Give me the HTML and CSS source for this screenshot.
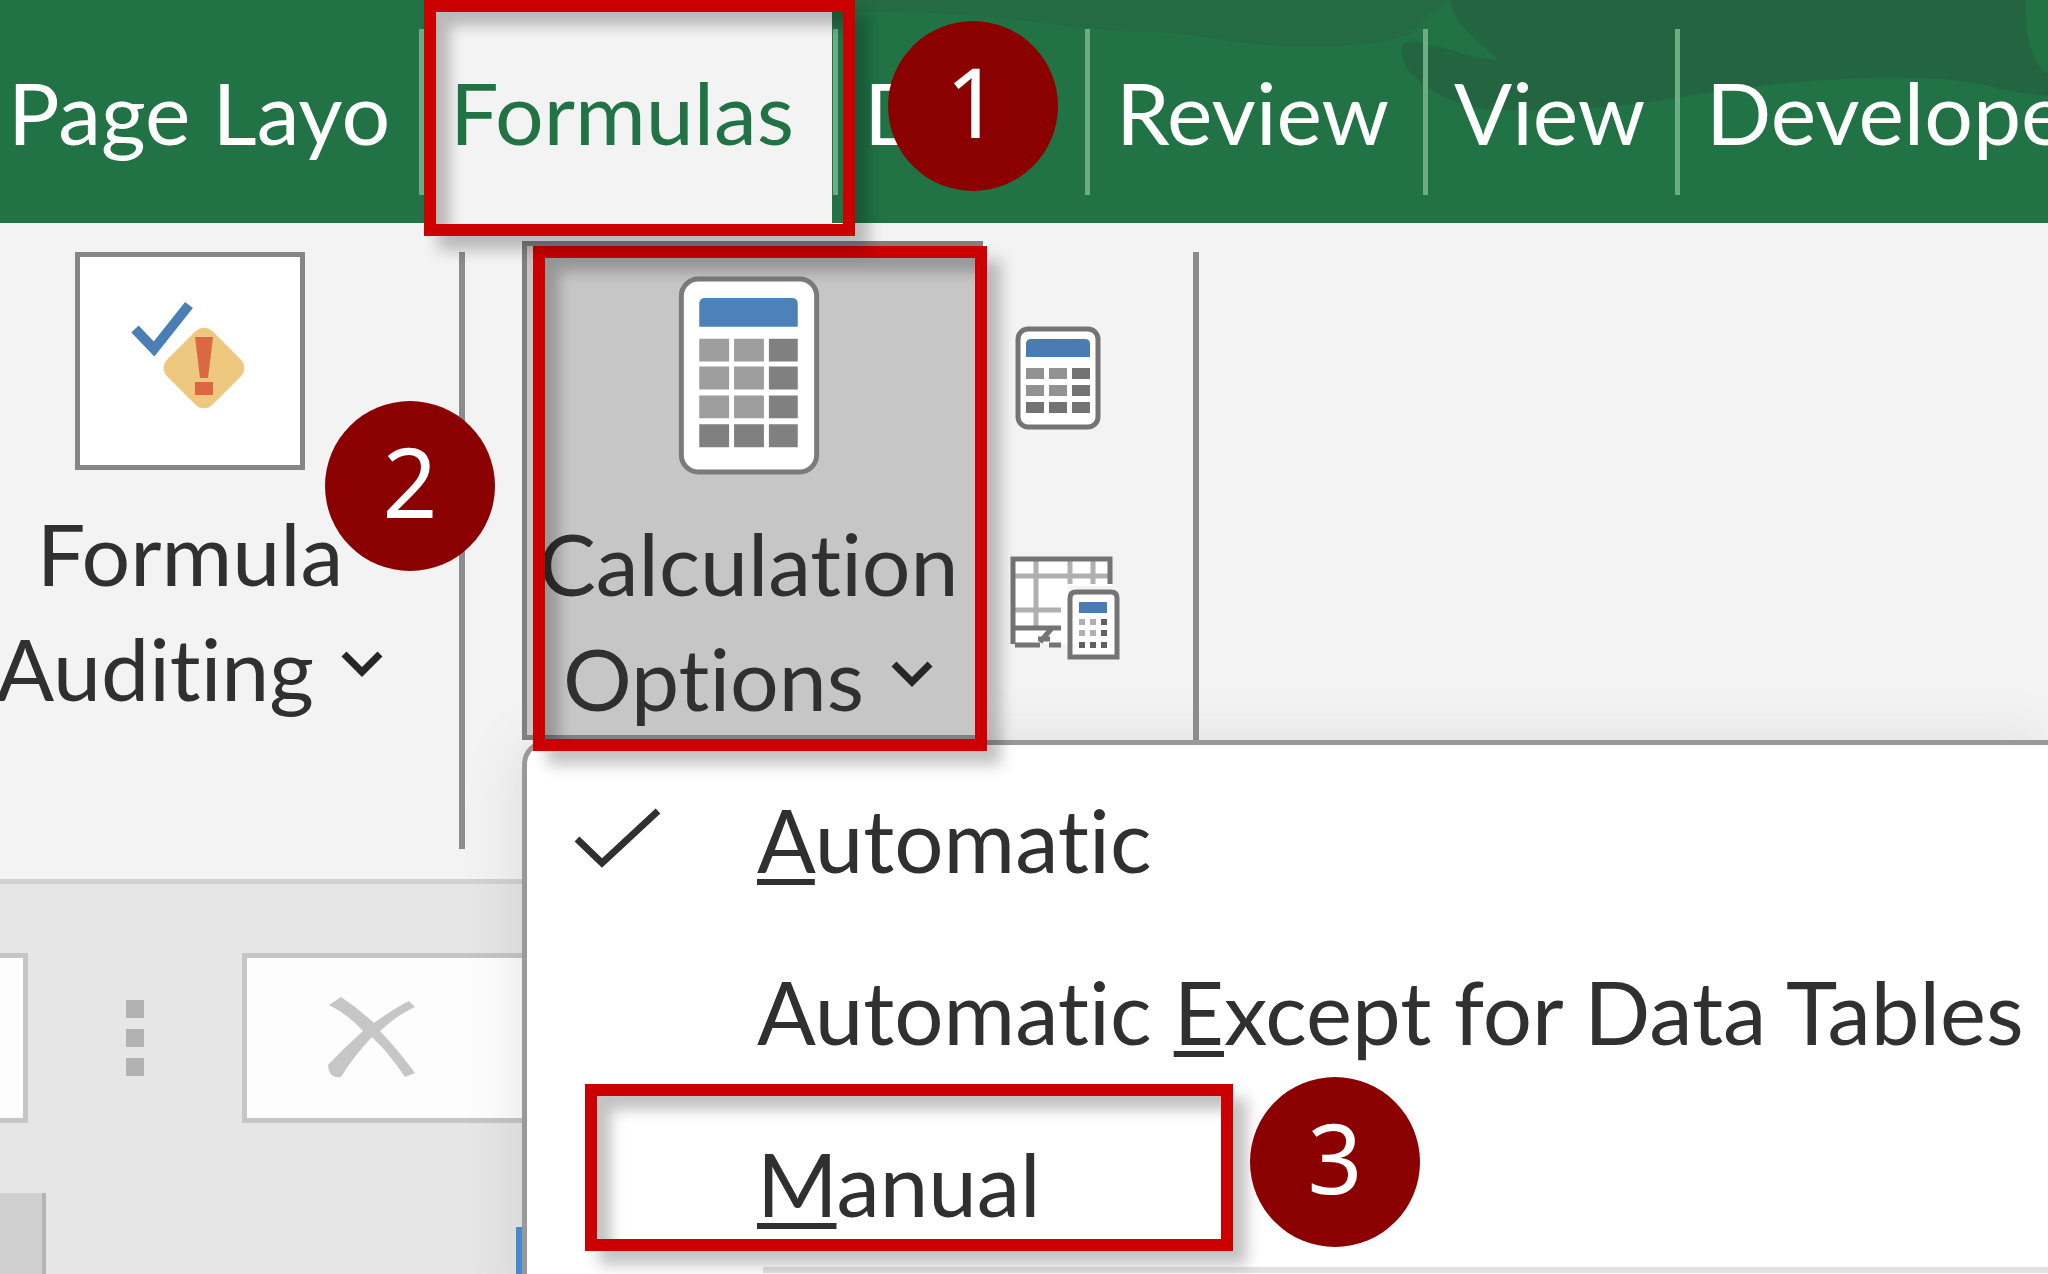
FILE: index.html
```html
<!DOCTYPE html>
<html lang="en">
<head>
<meta charset="utf-8">
<title>Calculation Options</title>
<link rel="stylesheet" href="styles.css">
</head>
<body>
<div class="app">
  <header class="titlebar">
    <svg class="pattern" viewBox="0 0 1200 223" preserveAspectRatio="xMaxYMin slice" aria-hidden="true">
      <path d="M0 0H604C560 20 590 46 470 46C380 48 350 30 290 32C200 28 150 10 0 12Z" fill="#246a43"/>
      <path d="M602 0H1178C1176 34 1184 64 1200 74V96C1150 92 1140 82 1090 79C1010 76 950 80 850 94C780 108 700 112 650 110C600 108 570 84 556 64C552 48 550 42 566 42C600 46 620 58 650 60C630 40 606 26 602 0Z" fill="#246541"/>
    </svg>
    <nav class="tabs" role="tablist" aria-label="Ribbon tabs">
      <button class="tab" role="tab">Page Layo</button>
      <button class="tab active" role="tab" aria-selected="true">Formulas<span class="frame"></span></button>
      <button class="tab" role="tab">Data<span class="badge">1</span></button>
      <button class="tab" role="tab">Review</button>
      <button class="tab" role="tab">View</button>
      <button class="tab" role="tab">Developer</button>
    </nav>
  </header>

  <section class="ribbon" aria-label="Formulas">
    <div class="group auditing">
      <button class="tool">
        <span class="tile">
          <svg width="120" height="122" viewBox="0 0 120 122" aria-hidden="true">
            <path d="M5 29L24 49L59 5" fill="none" stroke="#4a7eb4" stroke-width="10"/>
            <rect x="42" y="36" width="64" height="64" rx="12" transform="rotate(45 74 68)" fill="#edc87e"/>
            <path d="M65 37H83L78 78H70ZM65 82H83V95H65Z" fill="#dc6743"/>
          </svg>
        </span>
        <span class="label">Formula</span>
        <span class="label">Auditing
          <svg class="chevron" width="44" height="38" viewBox="0 0 44 38" aria-hidden="true"><path d="M4 5L22 23L40 5" fill="none" stroke="#262626" stroke-width="7"/></svg>
        </span>
      </button>
      <span class="badge">2</span>
    </div>

    <div class="group calculation">
      <button class="tool options" aria-haspopup="menu" aria-expanded="true">
        <svg width="142" height="200" viewBox="0 0 142 200" aria-hidden="true">
          <rect x="3" y="3" width="136" height="194" rx="17" fill="#fff" stroke="#7b7b7b" stroke-width="5"/>
          <path d="M21 51V28Q21 22 27 22H114Q120 22 120 28V51Z" fill="#4c81b9"/>
          <path d="M21 63h30v23h-30zM56 63h30v23h-30zM21 91h30v23h-30zM56 91h30v23h-30zM21 120h30v23h-30zM56 120h30v23h-30z" fill="#9e9e9e"/>
          <path d="M91 63h29v23h-29zM91 91h29v23h-29zM91 120h29v23h-29zM21 149h30v23h-30zM56 149h30v23h-30zM91 149h29v23h-29z" fill="#808080"/>
        </svg>
        <span class="label">Calculation</span>
        <span class="label">Options
          <svg class="chevron" width="44" height="38" viewBox="0 0 44 38" aria-hidden="true"><path d="M4 5L22 23L40 5" fill="none" stroke="#262626" stroke-width="7"/></svg>
        </span>
        <span class="frame"></span>
      </button>
      <div class="small-tools">
        <button class="small" aria-label="Calculate Now">
          <svg width="110" height="106" viewBox="0 0 110 106" aria-hidden="true">
            <rect x="8" y="3" width="80" height="98" rx="10" fill="#fff" stroke="#747474" stroke-width="5"/>
            <path d="M16 31V18Q16 13 21 13H75Q80 13 80 18V31Z" fill="#4a7cb3"/>
            <path d="M16 42h18v11h-18zM39 42h18v11h-18zM16 59h18v11h-18zM39 59h18v11h-18z" fill="#929292"/>
            <path d="M62 42h18v11h-18zM62 59h18v11h-18zM16 76h18v11h-18zM39 76h18v11h-18zM62 76h18v11h-18z" fill="#737373"/>
          </svg>
        </button>
        <button class="small" aria-label="Calculate Sheet">
          <svg width="110" height="106" viewBox="0 0 110 106" aria-hidden="true">
            <path d="M2 2H102V30H58V88H2Z" fill="#fff"/>
            <path d="M4 20H98M26 4V70M60 4V28M83 4V28M4 54H51" fill="none" stroke="#b0b0b0" stroke-width="5"/>
            <path d="M100 28V3H3V88M3 72H51M5 89H30M30 86L42 72M28 83H40M39 89H51" fill="none" stroke="#747474" stroke-width="5"/>
            <path d="M60 101V42Q60 36 66 36H101Q107 36 107 42V101Z" fill="#fff" stroke="#747474" stroke-width="5"/>
            <path d="M69 57V46H97V57Z" fill="#4a7cb3"/>
            <path d="M69 63h6v6h-6zM80 63h6v6h-6zM69 74h6v6h-6zM80 74h6v6h-6z" fill="#b0b0b0"/>
            <path d="M91 63h6v6h-6zM91 74h6v6h-6zM69 86h6v6h-6zM80 86h6v6h-6zM91 86h6v6h-6z" fill="#606060"/>
          </svg>
        </button>
      </div>
    </div>

    <div class="menu" role="menu" aria-label="Calculation Options">
      <button class="item" role="menuitemradio" aria-checked="true">
        <svg width="88" height="64" viewBox="0 0 88 64" aria-hidden="true"><path d="M3 32L28 56L84 4" fill="none" stroke="#303030" stroke-width="7"/></svg>
        <span class="text"><u>A</u>utomatic</span>
      </button>
      <button class="item" role="menuitemradio" aria-checked="false"><span class="text">Automatic <u>E</u>xcept for Data Tables</span></button>
      <button class="item" role="menuitemradio" aria-checked="false"><span class="text"><u>M</u>anual</span><span class="frame"></span><span class="badge">3</span></button>
      <hr class="divider">
    </div>
  </section>

  <section class="formula-bar" aria-label="Formula bar">
    <input class="name-box" type="text" aria-label="Name box">
    <span class="grip"><i></i><i></i><i></i></span>
    <div class="entry">
      <button class="cancel" aria-label="Cancel">
        <svg width="92" height="86" viewBox="0 0 92 86" aria-hidden="true"><path d="M2 10L14 2Q32 14 47 28Q66 14 82 6L88 12Q70 20 53 36Q72 56 88 78L78 82Q62 58 45 42Q26 62 14 82Q2 84 1 70Q18 52 36 36Q22 20 2 10Z" fill="#c6c6c6"/></svg>
      </button>
    </div>
  </section>

  <main class="sheet">
    <div class="corner"></div>
    <div class="selection"></div>
  </main>
</div>
</body>
</html>
```
FILE: styles.css
```css
* { box-sizing: border-box; }

body {
  margin: 0;
  background: #e6e6e6;
  color: #303030;
  font-family: Lato, "Noto Sans", sans-serif;
  font-size: 86px;
  font-variant-ligatures: none;
}

button {
  margin: 0;
  padding: 0;
  border: 0;
  background: none;
  color: inherit;
  font: inherit;
  font-variant-ligatures: none;
  text-align: left;
}

.app {
  display: flex;
  flex-direction: column;
  height: 100vh;
  overflow: hidden;
}

/* Tab strip */
.titlebar {
  position: relative;
  z-index: 2;
  flex: none;
  background: #217346;
  color: #fff;
}

.pattern {
  position: absolute;
  top: 0;
  right: 0;
  width: 1200px;
  height: 223px;
}

.tabs {
  position: relative;
  display: grid;
  grid-template-columns: 424px 414px 252px 338px 252px 1fr;
  height: 223px;
}

.tab {
  position: relative;
  min-width: 0;
  padding: 0 0 0 26px;
  line-height: 223px;
  white-space: nowrap;
}

.tab:first-child { padding-left: 8px; }

.tab::after {
  content: "";
  position: absolute;
  top: 29px;
  right: 0;
  width: 5px;
  height: 166px;
  background: #6bae86;
}

.tab:last-child::after { display: none; }

.tab.active {
  z-index: 1;
  background: linear-gradient(90deg, #f3f3f3 408px, #217346 408px);
  color: #217346;
}

/* Call-out frames and numbered badges */
.frame {
  position: absolute;
  z-index: 1;
  border: 12px solid #c00;
  box-shadow: 14px 14px 14px rgba(0, 0, 0, .24), inset 14px 14px 14px rgba(0, 0, 0, .24);
  pointer-events: none;
}

.tab .frame { inset: 0 -17px -13px 0; }

.badge {
  position: absolute;
  z-index: 3;
  width: 170px;
  height: 170px;
  border-radius: 50%;
  background: #8b0000;
  color: #fff;
  font-family: "Noto Sans", sans-serif;
  font-size: 96px;
  line-height: 160px;
  text-align: center;
}

.tab .badge { top: 21px; left: 50px; }

.tab:has(.badge) { z-index: 2; }

/* Ribbon */
.ribbon {
  position: relative;
  z-index: 1;
  display: flex;
  flex: none;
  height: 661px;
  border-bottom: 5px solid #d2d2d2;
  background: #f3f3f3;
}

.group { position: relative; display: flex; }

.group::after {
  content: "";
  position: absolute;
  top: 29px;
  right: 0;
  bottom: 30px;
  width: 6px;
  background: #8c8c8c;
}

.auditing { z-index: 2; width: 465px; }

.tool {
  display: flex;
  flex-direction: column;
  align-items: center;
}

.auditing .tool { width: 380px; padding-top: 29px; }

.tile {
  display: grid;
  place-items: center;
  width: 230px;
  height: 218px;
  margin-bottom: 25px;
  border: 5px solid #868686;
  background: #fff;
}

.label {
  display: flex;
  align-items: center;
  gap: 26px;
  line-height: 115px;
  white-space: nowrap;
}

.auditing .badge { top: 178px; left: 325px; }

.calculation { z-index: 1; width: 734px; padding-left: 57px; }

.calculation::after { bottom: 139px; }

.options {
  position: relative;
  z-index: 1;
  width: 461px;
  height: 499px;
  margin-top: 18px;
  padding: 30px 8px 0 0;
  border: 5px solid #808080;
  background: #c6c6c6;
}

.options > svg { margin-bottom: 30px; }

.options .frame { inset: 0 -9px -16px 6px; }

.small-tools {
  display: flex;
  flex-direction: column;
  gap: 124px;
  padding: 103px 0 0 27px;
}

.small { display: flex; }

/* Drop-down menu */
.menu {
  position: absolute;
  top: 517px;
  right: 0;
  left: 522px;
  padding-top: 8px;
  border: solid #999;
  border-width: 5px 0 0 5px;
  border-radius: 24px 0 0 0;
  background: #fff;
  box-shadow: 0 6px 64px rgba(0, 0, 0, .1);
  font-size: 87px;
}

.item {
  position: relative;
  display: grid;
  grid-template-columns: 88px 1fr;
  column-gap: 95px;
  align-items: center;
  width: 100%;
  height: 172px;
  padding-left: 47px;
  white-space: nowrap;
}

.item .text { grid-column: 2; }

.item u {
  text-decoration-thickness: 6px;
  text-underline-offset: 6px;
  text-decoration-skip-ink: none;
}

.item .frame { inset: -13px auto 18px 58px; width: 648px; }

.item .badge { top: -20px; left: 723px; }

.divider {
  height: 6px;
  margin: -2px 0 40px 236px;
  border: 0;
  background: #e1e1e1;
}

/* Formula bar and sheet */
.formula-bar {
  display: flex;
  align-items: center;
  flex: none;
  padding-top: 69px;
}

.name-box {
  width: 28px;
  height: 170px;
  padding: 0;
  border: 5px solid #c6c6c6;
  border-left: 0;
  border-radius: 0;
  background: #fdfdfd;
}

.grip {
  display: flex;
  flex-direction: column;
  gap: 11px;
  margin: 0 98px 0 98px;
}

.grip i { width: 18px; height: 18px; background: #b2b2b2; }

.entry {
  display: flex;
  align-items: center;
  flex: 1;
  height: 170px;
  padding-left: 80px;
  border: 5px solid #c6c6c6;
  background: #fdfdfd;
}

.cancel { display: flex; }

.sheet {
  display: flex;
  flex: 1;
  align-items: flex-end;
  gap: 470px;
}

.corner {
  width: 46px;
  height: 81px;
  border-right: 4px solid #b4b4b4;
  background: #d0d0d0;
}

.selection { width: 300px; height: 47px; background: #4a90d9; }
```
